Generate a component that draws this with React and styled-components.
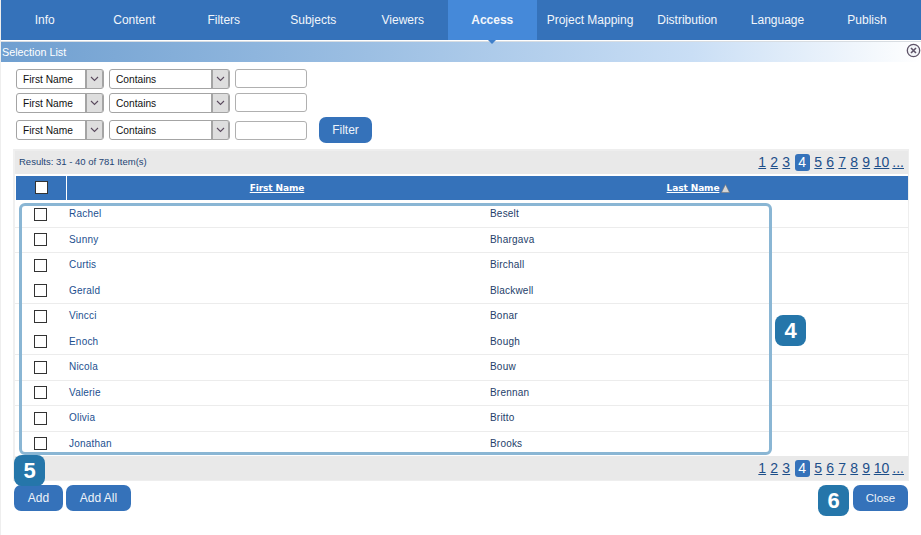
import React from 'react';
import styled, { createGlobalStyle } from 'styled-components';

const Global = createGlobalStyle`
  html, body { margin: 0; padding: 0; background: #fff; }
  body { font-family: "Liberation Sans", Arial, sans-serif; overflow: hidden; }
  * { box-sizing: border-box; }
`;
const Page = styled.div`
  position: relative; width: 921px; height: 535px; overflow: hidden;
  border-left: 1px solid #eee; margin: 0;
`;
const Nav = styled.nav`
  display: grid; margin-left: -1px; width: 921px; height: 40px;
  grid-template-columns: repeat(6, 89.5px) 106px 88.5px 92px 87px 10.5px;
  background: #3572ba;
`;
const Tab = styled.div`
  position: relative; display: flex; align-items: center; justify-content: center;
  color: #f2f6fb; font-size: 12px; white-space: nowrap;
  font-weight: ${p => (p.$active ? 700 : 400)};
  background: ${p => (p.$active ? '#4589d9' : 'transparent')};
  ${p => p.$active && `&::after { content: ''; position: absolute; left: 50%; bottom: -4px; margin-left: -4px;
    border-left: 4px solid transparent; border-right: 4px solid transparent; border-top: 4px solid #3f7fca; }`}
`;
const TitleBar = styled.div`
  margin-top: 1px; height: 21px; border-top: 1px solid #d8dde2; display: flex; align-items: center; justify-content: space-between;
  padding: 0 0 0 1px; color: #fff; font-size: 10.8px;
  background: linear-gradient(90deg, #6f9fd0 0%, #9cbfe3 40%, #c9def5 75%, #fff 100%);
`;
const CloseIcon = styled.svg`
  width: 15px; height: 15px; margin-top: -4px; flex: none;
`;
const Filters = styled.div`
  display: grid; grid-template-rows: 19px 19px 26px; row-gap: 5px; padding: 7px 0 0 15px; height: 87px;
`;
const FilterRow = styled.div`
  display: flex; gap: 5px; align-items: center;
`;
const Select = styled.div`
  display: flex; justify-content: space-between; width: ${p => p.$w}px; height: 20px;
  border: 1px solid #a4a4a4; border-radius: 3px; background: #fff; font-size: 10.2px; color: #111; line-height: 19px; padding-left: 6px;
`;
const Arrow = styled.span`
  width: 18px; background: #dedede; border: 1px solid #a4a4a4; border-width: 0 1px 0 2px; border-radius: 0 2px 2px 0;
  display: flex; align-items: center; justify-content: center; flex: none;
`;
const TextBox = styled.div`
  width: 72px; height: 19px; border: 1px solid #b0b0b0; border-radius: 3px; background: #fff;
`;
const Button = styled.div`
  display: flex; align-items: center; justify-content: center; height: 26px; width: ${p => p.$w}px;
  background: #3572ba; color: #eef3f9; font-size: 12px; border-radius: 7px; margin-left: ${p => p.$ml || 0}px;
`;
const CloseButton = styled(Button)`font-size: 11.5px;`;
const Results = styled.div`
  margin: 0 12px 0 12px; border-top: 2px solid #eee; border-left: 2px solid #f0f0f0; border-right: 1px solid #eee; border-bottom: 1px solid #eee;
  height: 332px;
  display: flex; flex-direction: column;
`;
const Bar = styled.div`
  height: ${p => p.$h}px; flex: none; background: #e9e9e9; display: flex; align-items: center; justify-content: space-between; padding: 0 4px;
  color: #1d4474; font-size: 9.5px;
`;
const ResultText = styled.span`margin-bottom: 3px;`;
const Pager = styled.div`
  display: flex; align-items: center; gap: 3px; font-size: 14px; color: #1d4f8a;
`;
const PageNum = styled.span`
  display: block; text-align: center; line-height: 17px; height: 17px;
  ${p => p.$on
    ? 'background: #3572ba; color: #fff; border-radius: 3px; width: 15px; margin: 0 1px;'
    : 'text-decoration: underline; min-width: 9px;'}
`;
const Head = styled.div`
  margin-top: 2px; margin-left: 1px; height: 24px; flex: none; display: grid; grid-template-columns: 51px 1fr; background: #3572ba;
  color: #fff; font-size: 10px; font-weight: 700;
`;
const HeadCheck = styled.div`
  display: flex; align-items: center; justify-content: center; border-right: 1px solid #fff; padding-bottom: 2px;
`;
const HeadCols = styled.div`
  display: grid; grid-template-columns: 420px 1fr; align-items: center;
`;
const HeadLabel = styled.span`
  text-align: center; text-decoration: underline; font-family: "DejaVu Sans", sans-serif; font-size: 9px;
  letter-spacing: -0.1px;
  display: flex; justify-content: center; align-items: center; gap: 2px;
  padding-left: ${p => p.$pl || 0}px;
`;
const Box = styled.span`
  display: block; width: 13px; height: 13px; border: 1px solid #333; background: #fff;
`;
const Rows = styled.div`flex: 1; overflow: hidden; padding-top: 2px;`;
const Row = styled.div`
  height: 25.5px; display: grid; grid-template-columns: 51px 421px 1fr; align-items: center;
  border-bottom: 1px solid ${p => (p.$plain ? 'transparent' : '#ececec')};
  font-size: 10px;
`;
const CheckCell = styled.div`display: flex; justify-content: center;`;
const Cell = styled.div`
  padding-left: 3px; color: ${p => (p.$link ? '#1c4f8f' : '#24406a')}; letter-spacing: .2px; margin-top: -1px;
`;
const Frame = styled.div`
  position: absolute; left: 18px; top: 203px; width: 753px; height: 252px; border: 3px solid #8ab6d4; border-radius: 6px; pointer-events: none;
`;
const Badge = styled.div`
  position: absolute; left: ${p => p.$x}px; top: ${p => p.$y}px; width: 31px; height: 31px; border-radius: 8px;
  background: #2576aa; color: #fff; font-size: 22px; font-weight: 700; display: flex; align-items: center; justify-content: center;
`;
const Footer = styled.div`
  display: flex; align-items: flex-start; justify-content: space-between; padding: 4px 13px 0 13px;
`;
const Group = styled.div`display: flex; gap: 3px;`;

const data = [
  ['Rachel', 'Beselt'], ['Sunny', 'Bhargava'], ['Curtis', 'Birchall', 1], ['Gerald', 'Blackwell'],
  ['Vincci', 'Bonar', 1], ['Enoch', 'Bough'], ['Nicola', 'Bouw'], ['Valerie', 'Brennan'],
  ['Olivia', 'Britto'], ['Jonathan', 'Brooks', 1],
];
const Chevron = () => (
  <svg width="9" height="6" viewBox="0 0 9 6"><path d="M1 1l3.5 3.5L8 1" fill="none" stroke="#5a4a5e" strokeWidth="1.1" /></svg>
);
const FilterSet = () => (
  <>
    <Select $w={88}>First Name<Arrow><Chevron /></Arrow></Select>
    <Select $w={121}>Contains<Arrow><Chevron /></Arrow></Select>
    <TextBox />
  </>
);
const PagerNums = () => (
  <Pager>
    {['1','2','3','4','5','6','7','8','9','10','...'].map(n => <PageNum key={n} $on={n === '4'}>{n}</PageNum>)}
  </Pager>
);

export default function App() {
  return (
    <Page>
      <Global />
      <Nav>
        {['Info','Content','Filters','Subjects','Viewers','Access','Project Mapping','Distribution','Language','Publish'].map(t => (
          <Tab key={t} $active={t === 'Access'}>{t}</Tab>
        ))}
      </Nav>
      <TitleBar>
        Selection List
        <CloseIcon viewBox="0 0 15 15">
          <circle cx="7.5" cy="7.5" r="6.2" fill="#f4f6f9" stroke="#5e5468" strokeWidth="1.3" />
          <path d="M5 5l5 5M10 5l-5 5" stroke="#5e5468" strokeWidth="1.6" />
        </CloseIcon>
      </TitleBar>
      <Filters>
        <FilterRow><FilterSet /></FilterRow>
        <FilterRow><FilterSet /></FilterRow>
        <FilterRow><FilterSet /><Button $w={53} $ml={7}>Filter</Button></FilterRow>
      </Filters>
      <Results>
        <Bar $h={23}><ResultText>Results: 31 - 40 of 781 Item(s)</ResultText><PagerNums /></Bar>
        <Head>
          <HeadCheck><Box /></HeadCheck>
          <HeadCols>
            <HeadLabel>First Name</HeadLabel>
            <HeadLabel $pl={2}>Last Name
              <svg width="9" height="9" viewBox="0 0 9 9"><path d="M4.5 0.5L8.5 8.5H0.5z" fill="#d5d5d5" stroke="#777" strokeWidth=".6" /></svg>
            </HeadLabel>
          </HeadCols>
        </Head>
        <Rows>
          {data.map(([a, b, plain]) => (
            <Row key={a} $plain={plain}>
              <CheckCell><Box /></CheckCell>
              <Cell $link>{a}</Cell>
              <Cell>{b}</Cell>
            </Row>
          ))}
        </Rows>
        <Bar $h={24}><span /><PagerNums /></Bar>
      </Results>
      <Footer>
        <Group><Button $w={49}>Add</Button><Button $w={65}>Add All</Button></Group>
        <CloseButton $w={55}>Close</CloseButton>
      </Footer>
      <Frame />
      <Badge $x={774} $y={315}>4</Badge>
      <Badge $x={13} $y={455}>5</Badge>
      <Badge $x={817} $y={485}>6</Badge>
    </Page>
  );
}
